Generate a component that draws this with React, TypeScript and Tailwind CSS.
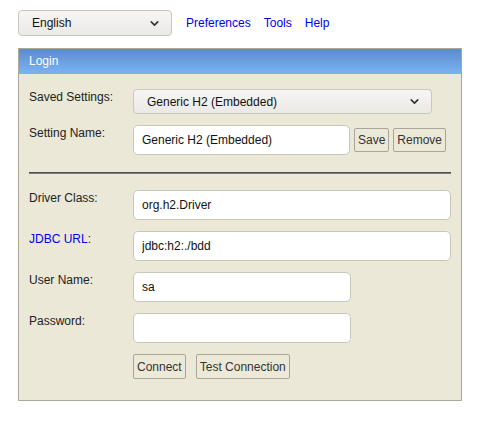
import { ChevronDown } from 'lucide-react'

const inputCls =
  'h-[30px] rounded-[5px] border border-[#c8c5bb] bg-white px-[8px] text-[12px] text-[#111] outline-none'
const btnCls =
  'rounded-[2px] border border-[#a9a699] bg-[#ece9d8] px-[3px] text-[12px] leading-none text-[#333]'

function Row({ label, children }: { label: React.ReactNode; children: React.ReactNode }) {
  return (
    <div className="flex items-start">
      <div className="w-[104px] shrink-0 leading-[16px]">{label}</div>
      <div className="flex flex-1 items-start">{children}</div>
    </div>
  )
}

export default function App() {
  return (
    <div className="min-h-screen bg-white font-['Liberation_Sans',Arial,sans-serif] text-[12px] text-[#222]">
      <div className="flex items-center pl-[18px] pt-[10px]">
        <div className="flex h-[26px] w-[154px] items-center justify-between rounded-[4px] border border-[#c9c6bf] bg-gradient-to-b from-[#f7f6f4] to-[#ebe9e6] pl-[13px] pr-[10px] text-[#111]">
          <span>English</span>
          <ChevronDown size={13} strokeWidth={3} className="text-[#333]" />
        </div>
        <nav className="ml-[14px] flex gap-[13px] text-[#0000ee]">
          <a>Preferences</a>
          <a>Tools</a>
          <a>Help</a>
        </nav>
      </div>

      <div className="ml-[18px] mt-[12px] w-[444px] border border-[#aca899] bg-[#ebe8d8]">
        <div className="h-[25px] bg-gradient-to-b from-[#5b8acd] to-[#7bb4f3] pl-[10px] leading-[25px] text-white">
          Login
        </div>

        <div className="pl-[10px] pr-[10px] pt-[15px] pb-[21px]">
          <Row label="Saved Settings:">
            <div className="flex h-[25px] w-[299px] items-center justify-between rounded-[4px] border border-[#cbc8c1] bg-gradient-to-b from-[#f7f6f4] to-[#ebe9e6] pl-[13px] pr-[10px] text-[#111]">
              <span>Generic H2 (Embedded)</span>
              <ChevronDown size={13} strokeWidth={3} className="text-[#333]" />
            </div>
          </Row>

          <div className="mt-[11px]">
            <Row label="Setting Name:">
              <input className={`${inputCls} w-[217px]`} defaultValue="Generic H2 (Embedded)" />
              <button className={`${btnCls} ml-[4px] mt-[3px] h-[24px]`}>Save</button>
              <button className={`${btnCls} ml-[4px] mt-[3px] h-[24px]`}>Remove</button>
            </Row>
          </div>

          <div className="mt-[17px]">
            <div className="h-[1px] bg-[#4f4f4f]" />
            <div className="h-[1px] bg-[#7d7d7d]" />
          </div>

          <div className="mt-[16px] flex flex-col gap-[11px]">
            <Row label="Driver Class:">
              <input className={`${inputCls} w-full`} defaultValue="org.h2.Driver" />
            </Row>
            <Row
              label={
                <span>
                  <span className="text-[#0000ee]">JDBC URL</span>:
                </span>
              }
            >
              <input className={`${inputCls} w-full`} defaultValue="jdbc:h2:./bdd" />
            </Row>
            <Row label="User Name:">
              <input className={`${inputCls} w-[218px]`} defaultValue="sa" />
            </Row>
            <Row label="Password:">
              <input type="password" className={`${inputCls} w-[218px]`} defaultValue="" />
            </Row>
            <Row label="">
              <button className={`${btnCls} h-[25px]`}>Connect</button>
              <button className={`${btnCls} ml-[10px] h-[25px]`}>Test Connection</button>
            </Row>
          </div>
        </div>
      </div>
    </div>
  )
}
